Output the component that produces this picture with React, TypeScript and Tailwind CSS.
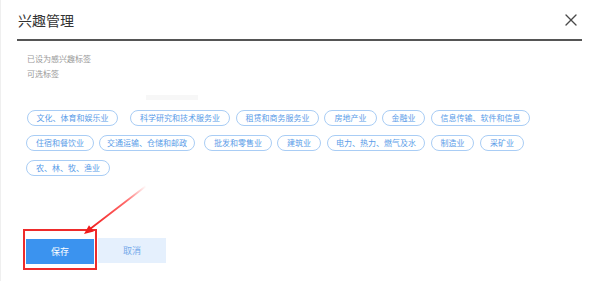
import { X } from "lucide-react";

type Tag = { t: string; w: string; m: string };

const rows: Tag[][] = [
  [
    { t: "文化、体育和娱乐业", w: "w-[91px]", m: "mr-[12px]" },
    { t: "科学研究和技术服务业", w: "w-[100px]", m: "mr-[6px]" },
    { t: "租赁和商务服务业", w: "w-[83px]", m: "mr-[5px]" },
    { t: "房地产业", w: "w-[53px]", m: "mr-[5px]" },
    { t: "金融业", w: "w-[43px]", m: "mr-[6px]" },
    { t: "信息传输、软件和信息", w: "w-[99px]", m: "mr-0" },
  ],
  [
    { t: "住宿和餐饮业", w: "w-[68px]", m: "mr-[5px]" },
    { t: "交通运输、仓储和邮政", w: "w-[96px]", m: "mr-[9px]" },
    { t: "批发和零售业", w: "w-[68px]", m: "mr-[5px]" },
    { t: "建筑业", w: "w-[44px]", m: "mr-[6px]" },
    { t: "电力、热力、燃气及水", w: "w-[98px]", m: "mr-[6px]" },
    { t: "制造业", w: "w-[43px]", m: "mr-[6px]" },
    { t: "采矿业", w: "w-[44px]", m: "mr-0" },
  ],
  [{ t: "农、林、牧、渔业", w: "w-[84px]", m: "mr-0" }],
];

export default function App() {
  return (
    <div
      className="relative w-[600px] h-[281px] overflow-hidden bg-white border-l border-[#efefef] pl-[16px] pr-[18px]"
      style={{ fontFamily: '"Noto Sans CJK SC", "Noto Sans", sans-serif' }}
    >
      {/* header */}
      <div className="h-[41px] flex items-center justify-between border-b-2 border-[#555555]">
        <h1 className="text-[14px] leading-none text-[#333333] pl-[1px] pt-[1px]">兴趣管理</h1>
        <X className="w-[20px] h-[20px] mr-[1px] text-[#4a4a4a]" strokeWidth={1.6} />
      </div>

      {/* labels */}
      <div className="mt-[10px] pl-[10px] text-[8px] leading-[15px] text-[#999999]">
        <p>已设为感兴趣标签</p>
        <p>可选标签</p>
      </div>

      <div className="mt-[14px] ml-[129px] w-[52px] h-[5px] bg-[#f7f7f7]" />

      {/* tags */}
      <div className="mt-[10px] pl-[9px] flex flex-col gap-[9px]">
        {rows.map((row, i) => (
          <div key={i} className={i === 0 ? "flex pl-[1px]" : "flex"}>
            {row.map((tag) => (
              <span
                key={tag.t}
                className={`${tag.w} ${tag.m} h-[16px] shrink-0 flex items-center justify-center rounded-full border border-[#a9cdf5] text-[8px] leading-none text-[#5a9ce8] whitespace-nowrap`}
              >
                {tag.t}
              </span>
            ))}
          </div>
        ))}
      </div>

      {/* buttons */}
      <div className="mt-[53px] pl-[6px] flex items-center">
        <div className="border-2 border-[#ee2b2b] px-[1px] pt-[5px] pb-[4px]">
          <button className="w-[68px] h-[25px] bg-[#3b93ef] text-white text-[9px] leading-none">
            保存
          </button>
        </div>
        <button className="ml-[1px] mt-[1px] w-[68px] h-[25px] bg-[#e5f0fd] text-[#74aaea] text-[9px] leading-none">
          取消
        </button>
      </div>

      {/* annotation arrow */}
      <svg className="absolute left-0 top-0 pointer-events-none" width="600" height="281">
        <defs>
          <linearGradient id="fade" x1="145" y1="186" x2="88" y2="229" gradientUnits="userSpaceOnUse">
            <stop offset="0" stopColor="#ff2a2a" stopOpacity="0" />
            <stop offset="0.35" stopColor="#ff2a2a" stopOpacity="0.7" />
            <stop offset="1" stopColor="#f01c1c" stopOpacity="1" />
          </linearGradient>
        </defs>
        <line x1="145" y1="186" x2="89" y2="229" stroke="url(#fade)" strokeWidth="1.8" strokeLinecap="round" />
        <polygon points="83,234 92.8,231.6 88,225.2" fill="#f01c1c" />
      </svg>
    </div>
  );
}
